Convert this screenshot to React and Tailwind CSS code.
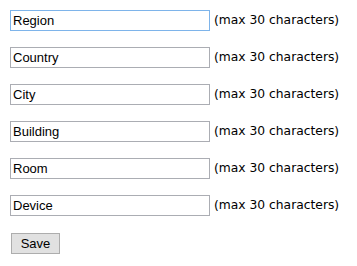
import React from 'react';

const fields = ['Region', 'Country', 'City', 'Building', 'Room', 'Device'];

const App = () => {
    return (
        <div className="w-[357px] h-[266px] bg-white pl-[10px] pt-[10px]">
            <div className="flex flex-col gap-[16px]">
                {fields.map((name, i) => (
                    <div key={name} className="flex items-center">
                        <input
                            type="text"
                            defaultValue={name}
                            className={`w-[200px] h-[21px] px-[2px] bg-white text-[13px] text-black outline-none border ${
                                i === 0 ? 'border-[#7eb4ea]' : 'border-[#abadb3]'
                            }`}
                            style={{ fontFamily: '"Liberation Sans", Arial, sans-serif' }}
                        />
                        <span
                            className="ml-[4px] text-[12.3px] text-black whitespace-nowrap"
                            style={{ fontFamily: '"DejaVu Sans", Verdana, sans-serif' }}
                        >
                            (max 30 characters)
                        </span>
                    </div>
                ))}
            </div>
            <button
                type="button"
                className="mt-[17px] ml-[1px] w-[49px] h-[21px] bg-[#e1e1e1] border border-[#adadad] text-[13px] text-black"
                style={{ fontFamily: '"Liberation Sans", Arial, sans-serif' }}
            >
                Save
            </button>
        </div>
    );
};

export default App;
